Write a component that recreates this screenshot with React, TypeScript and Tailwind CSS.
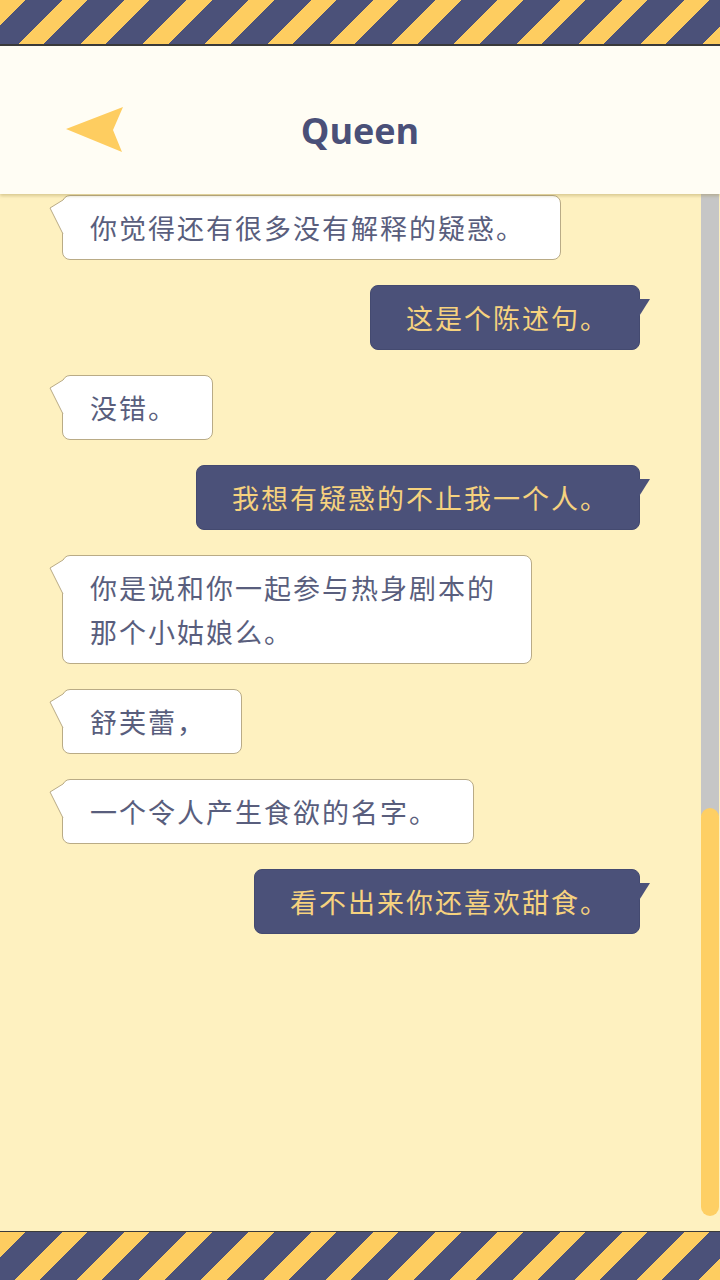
import React from "react";

type Msg = { side: "l" | "r"; lines: string[] };

const MESSAGES: Msg[] = [
  { side: "l", lines: ["你觉得还有很多没有解释的疑惑。"] },
  { side: "r", lines: ["这是个陈述句。"] },
  { side: "l", lines: ["没错。"] },
  { side: "r", lines: ["我想有疑惑的不止我一个人。"] },
  { side: "l", lines: ["你是说和你一起参与热身剧本的", "那个小姑娘么。"] },
  { side: "l", lines: ["舒芙蕾，"] },
  { side: "l", lines: ["一个令人产生食欲的名字。"] },
  { side: "r", lines: ["看不出来你还喜欢甜食。"] },
];

const stripes =
  "bg-[repeating-linear-gradient(135deg,#fecd60_0_18px,#4b5179_18px_44px)]";

function Bubble({ msg }: { msg: Msg }) {
  const left = msg.side === "l";
  return (
    <div
      className={
        left
          ? "relative self-start ml-[62px] rounded-[8px] border border-[#b9ab86] bg-white pl-[27px] pr-[35px] pt-[10px] pb-[9px] text-[#595e7d]"
          : "relative self-end mr-[61px] rounded-[8px] border border-[#444a70] bg-[#4b5179] pl-[35px] pr-[30px] pt-[10px] pb-[9px] text-[#f6d27e]"
      }
    >
      {left ? (
        <svg className="absolute left-[-14px] top-[3px]" width="16" height="38" viewBox="0 0 16 38">
          <polygon points="14,1 1,9 14,35 16,35 16,1" fill="#ffffff" />
          <polyline points="14,1 1,9 14,35" fill="none" stroke="#b9ab86" strokeWidth="1" />
        </svg>
      ) : (
        <svg className="absolute right-[-13px] top-[12px]" width="15" height="22" viewBox="0 0 15 22">
          <polygon points="0,1 13,1 1,20 0,20" fill="#4b5179" />
        </svg>
      )}
      <p className="text-[27px] leading-[44px] tracking-[2px] whitespace-nowrap">
        {msg.lines.map((l, i) => (
          <React.Fragment key={i}>
            {i > 0 && <br />}
            {l}
          </React.Fragment>
        ))}
      </p>
    </div>
  );
}

export default function App() {
  return (
    <div
      className="w-[720px] h-[1280px] flex flex-col overflow-hidden bg-[#fef1c0]"
      style={{ fontFamily: '"Noto Sans CJK SC", "Noto Sans", sans-serif' }}
    >
      <div className={`h-[44px] shrink-0 ${stripes}`} />
      <div className="h-[2px] shrink-0 bg-[#3a3a3a]" />

      <header className="relative z-10 h-[148px] shrink-0 bg-[#fffdf4] shadow-[0_2px_3px_rgba(150,130,60,0.35)] grid grid-cols-[1fr_auto_1fr] items-center pt-[22px]">
        <div className="pl-[64px]">
          <svg width="62" height="48" viewBox="0 0 62 48">
            <polygon points="2,22 59,0 49,23 58,45" fill="#fecd60" strokeLinejoin="round" />
          </svg>
        </div>
        <h1
          className="text-[36px] font-bold text-[#4a5078] leading-none"
          style={{ fontFamily: '"Open Sans", "Noto Sans", sans-serif' }}
        >
          Queen
        </h1>
        <div />
      </header>

      <main className="flex-1 flex min-h-0">
        <div className="flex-1 flex flex-col gap-[25px] pt-[1px]">
          {MESSAGES.map((m, i) => (
            <Bubble key={i} msg={m} />
          ))}
        </div>
        <div className="w-[18px] mr-[1px] flex flex-col">
          <div className="h-[622px] bg-[#c6c6c6]" />
          <div className="relative -mt-[8px] h-[408px] rounded-[9px] bg-[#fecf64]" />
        </div>
      </main>

      <div className="h-[1px] shrink-0 bg-[#3a3a3a]" />
      <div className={`h-[48px] shrink-0 ${stripes}`} />
    </div>
  );
}
